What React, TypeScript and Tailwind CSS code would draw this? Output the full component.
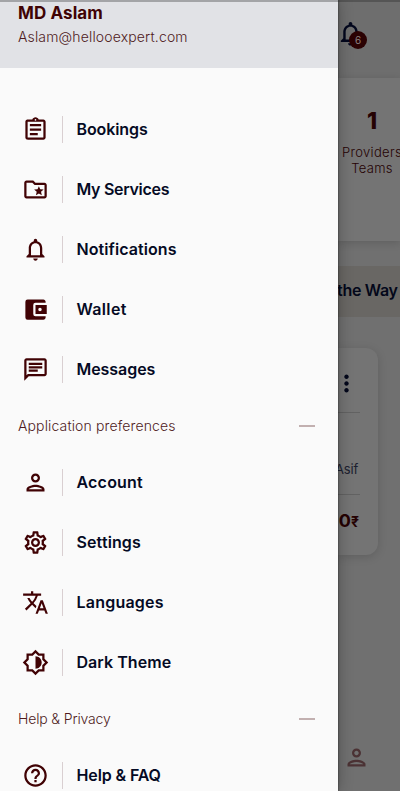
import type { IconType } from "react-icons";
import {
  MdMoreVert,
  MdAccountBalanceWallet,
  MdOutlineAssignment,
  MdOutlineBrightness6,
  MdOutlineChat,
  MdOutlineFolderSpecial,
  MdHelpOutline,
  MdNotificationsNone,
  MdOutlinePerson,
  MdOutlineSettings,
  MdTranslate,
} from "react-icons/md";

interface MenuEntry {
  label: string;
  icon: IconType;
  tracking: string;
}

const mainItems: MenuEntry[] = [
  { label: "Bookings", icon: MdOutlineAssignment, tracking: "tracking-[-0.1px]" },
  { label: "My Services", icon: MdOutlineFolderSpecial, tracking: "tracking-[-0.3px]" },
  { label: "Notifications", icon: MdNotificationsNone, tracking: "tracking-[0.08px]" },
  { label: "Wallet", icon: MdAccountBalanceWallet, tracking: "tracking-[0.35px]" },
  { label: "Messages", icon: MdOutlineChat, tracking: "tracking-[-0.05px]" },
];

const preferenceItems: MenuEntry[] = [
  { label: "Account", icon: MdOutlinePerson, tracking: "tracking-[0.2px]" },
  { label: "Settings", icon: MdOutlineSettings, tracking: "tracking-[0.12px]" },
  { label: "Languages", icon: MdTranslate, tracking: "tracking-[0.22px]" },
  { label: "Dark Theme", icon: MdOutlineBrightness6, tracking: "tracking-[0.05px]" },
];

const helpItems: MenuEntry[] = [
  { label: "Help & FAQ", icon: MdHelpOutline, tracking: "tracking-[-0.12px]" },
];

function MenuRow({ label, icon: Icon, tracking }: MenuEntry) {
  return (
    <li className="flex h-[60px] items-center pl-[22px]">
      <Icon className="size-[27px] shrink-0 text-[#400204]" />
      <span className="ml-[13px] h-[27px] w-px bg-[#d9cfd1]" />
      <span className={`ml-[13.5px] text-[16px] font-semibold whitespace-nowrap text-[#050a24] ${tracking}`}>
        {label}
      </span>
    </li>
  );
}

function SectionTitle({ title, tracking }: { title: string; tracking: string }) {
  return (
    <div className="flex h-[53px] items-center justify-between pr-[23px] pl-[18px]">
      <span className={`text-[14px] font-light whitespace-nowrap text-[#4f1a1c] ${tracking}`}>{title}</span>
      <span className="h-[2px] w-[16px] bg-[#c2b0b0]" />
    </div>
  );
}

function Drawer() {
  return (
    <aside className="absolute top-0 left-0 h-full w-[338px] overflow-hidden bg-[#fafafa] shadow-[0_0_2px_rgba(0,0,0,0.6),0_0_14px_rgba(0,0,0,0.3)]">
      <header className="h-[68px] border-t-2 border-[#a3a4a7] bg-[#e1e2e6] pl-[18px]">
        <h1 className="h-[23px] text-[17px] leading-[23px] font-bold tracking-[0.1px] text-[#400204]">MD Aslam</h1>
        <p className="h-[24px] text-[14px] leading-[24px] font-light tracking-[0.15px] text-[#4f1a1c]">
          Aslam@hellooexpert.com
        </p>
      </header>
      <ul className="pt-[31px]">
        {mainItems.map((item) => (
          <MenuRow key={item.label} {...item} />
        ))}
      </ul>
      <SectionTitle title="Application preferences" tracking="tracking-[0.13px]" />
      <ul>
        {preferenceItems.map((item) => (
          <MenuRow key={item.label} {...item} />
        ))}
      </ul>
      <SectionTitle title="Help & Privacy" tracking="tracking-[-0.15px]" />
      <ul>
        {helpItems.map((item) => (
          <MenuRow key={item.label} {...item} />
        ))}
      </ul>
    </aside>
  );
}

// Dashboard behind the drawer, already dimmed by the scrim
function Dashboard() {
  return (
    <main className="ml-[338px] flex h-full w-[62px] flex-col overflow-hidden bg-[#707070]">
      <div className="h-[78px] shrink-0 border-t-2 border-[#555] bg-[#6e6e6e]">
        <div className="relative mt-[17px] ml-[-2px] size-[29px]">
          <MdNotificationsNone className="size-[29px] text-[#03071d]" />
          <span className="absolute top-[12px] left-[13px] flex size-[18px] items-center justify-center rounded-full bg-[#2b0203] text-[10px] text-[#8c8080]">
            6
          </span>
        </div>
      </div>

      <section className="flex h-[163px] shrink-0 flex-col items-center bg-[#747474] pt-[28px] text-[#250203] shadow-[0_2px_8px_rgba(0,0,0,0.15)]">
        <span className="ml-[6px] text-[23px] leading-[30px] font-extrabold">1</span>
        <p className="mt-[8px] ml-[6px] text-center text-[13px] leading-[16px] font-light tracking-[0.3px]">
          Providers
          <br />
          Teams
        </p>
      </section>

      <div className="mt-[25px] flex h-[51px] shrink-0 items-center bg-[#696764] pb-[3px] text-[16px] font-semibold tracking-[-0.3px] whitespace-nowrap text-[#03071a]">
        <span className="-ml-px">the Way</span>
      </div>

      <section className="mt-[31px] h-[207px] w-[40px] shrink-0 rounded-r-[12px] bg-[#747474] shadow-[0_2px_10px_rgba(0,0,0,0.15)]">
        <div className="flex h-[65px] w-[22px] items-center justify-end border-b border-[#626262] pt-[6px]">
          <MdMoreVert className="size-[27px] shrink-0 text-[#03071a]" />
        </div>
        <div className="flex h-[82px] w-[22px] items-end justify-end border-b border-[#626262] pr-[2px] pb-[15px] text-[13px] leading-[20px] tracking-[-0.2px] text-[#1c1f30]">
          Asif
        </div>
        <div className="flex h-[52px] w-[22px] items-baseline justify-end pt-[12px] pr-px text-[18px] font-bold text-[#250203]">
          0<span className="text-[14px]">₹</span>
        </div>
      </section>

      <MdOutlinePerson className="mt-[189px] ml-[5px] size-[27px] shrink-0 text-[#4b3234]" />
    </main>
  );
}

export default function App() {
  return (
    <div className="h-[800px] w-[400px] overflow-hidden bg-white font-[Inter,sans-serif]">
      <div className="relative h-[791px] w-[400px] overflow-hidden">
        <Dashboard />
        <Drawer />
      </div>
    </div>
  );
}
